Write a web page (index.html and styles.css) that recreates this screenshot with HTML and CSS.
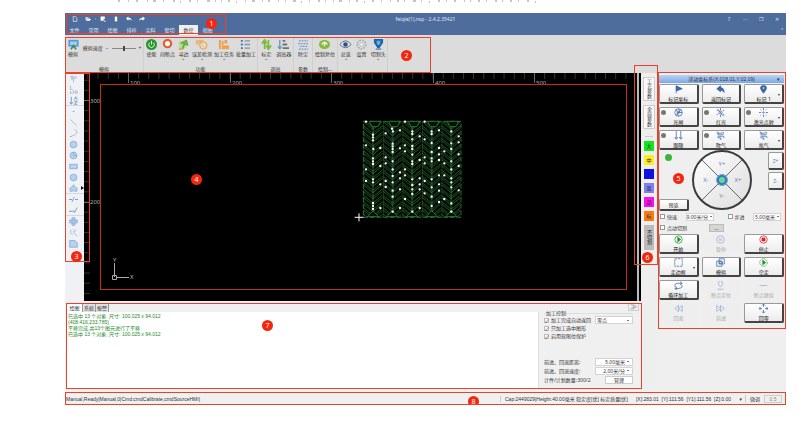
FILE: index.html
```html
<!DOCTYPE html>
<html>
<head>
<meta charset="utf-8">
<title>feiqie(1).nsp - 2.4.2.35421</title>
<link rel="stylesheet" href="styles.css">
</head>
<body>
<svg class="lead" viewBox="0 0 430 3" aria-hidden="true"><path d="M2 1h2m8 0h1m7 0h2m9 0h1m5 0h3m7 0h1m9 0h2m5 1h1m8-1h2m6 0h1m9 0h3m5 0h1m5 0h1m6 0h2m6 1h1m8-1h1m6 0h3m7 0h1m5 0h2m8 0h1m6 0h1m7 0h3m5 1h1m7-1h1m8 0h2m5 0h1m7 0h1m5 0h3m7 0h1m6 0h2m6 1h1m7-1h2m7 0h1m8 0h1m6 0h2m5 0h1m8 0h3m5 0h1m7 1h1m8-1h2m6 0h1m7 0h2m8 0h1m5 0h1m7 0h2m6 0h1m8 0h2m5 0h1m7 0h2m6 0h1m8 0h2m6 1h1"/></svg>
<div class="app">
  <header class="titlebar">
    <div class="title-row">
      <nav class="quick">
        <svg viewBox="0 0 10 10"><path d="M2 1h4l2 2v6H2z"/></svg>
        <svg viewBox="0 0 10 10"><path class="solid" d="M1 2h3l1 1h3v1H3L1 8zM3 5h7L8 8H2z"/></svg>
        <svg viewBox="0 0 10 10" class="narrow"><path class="solid" d="M3 4h4L5 7z"/></svg>
        <svg viewBox="0 0 10 10"><path class="solid" d="M1 1h7v4H6v3H1z"/><path d="M7 6v3h3"/></svg>
        <svg viewBox="0 0 10 10"><path class="solid" d="M3 1h4v8H3z"/></svg>
        <svg viewBox="0 0 10 10"><path class="solid" d="M0 4l4-3v2q5 0 6 5-2-3-6-2v2z"/></svg>
        <svg viewBox="0 0 10 10"><path class="solid" d="M10 4L6 1v2Q1 3 0 8q2-3 6-2v2z"/></svg>
      </nav>
      <h1>feiqie(1).nsp - 2.4.2.35421</h1>
      <div class="window-buttons"><button>?</button><button>─</button><button>❐</button><button>✕</button></div>
    </div>
    <nav class="tabs"><a href="#">文件</a><a href="#">常用</a><a href="#">绘图</a><a href="#">排样</a><a href="#">尖料</a><a href="#">套切</a><a href="#" class="active">数控</a><a href="#">视图</a><button class="fold">⌃</button></nav>
    <span class="mark mark-1"></span><b class="badge badge-1">1</b>
  </header>

  <section class="ribbon">
    <div class="group g-sim">
      <div class="tools">
        <button class="tool"><svg viewBox="0 0 14 13"><rect x="1" y="1" width="12" height="8" fill="#5b9bd5"/><path d="M3 3h8v4H3z" fill="#9fd0f0"/><path d="M4 12l3-4 3 4" fill="none" stroke="#3b8a5a" stroke-width="2"/></svg>模拟</button>
        <label class="speed">模拟速度<span>−</span><input type="range" min="0" max="100" value="50"><span>+</span></label>
      </div>
      <h2>模拟</h2>
    </div>
    <div class="group g-func">
      <div class="tools">
        <button class="tool"><svg viewBox="0 0 12 12"><circle cx="6" cy="6" r="6" fill="#25962a"/><path d="M4 4a3 3 0 1 0 4 0M6 2v4" fill="none" stroke="#fff"/></svg>使能</button>
        <button class="tool"><svg viewBox="0 0 12 12"><circle cx="6" cy="5" r="4" fill="#fff" stroke="#ec5b2b" stroke-width="2.4"/></svg>间断点</button>
        <button class="tool more"><svg viewBox="0 0 12 12"><path d="M1 2h8v8H1z" fill="#b7dca0"/><path d="M3 5l6-3 1 4-3-1-2 6" fill="none" stroke="#5fae35" stroke-width="2"/><path d="M1 10h4v2H1z" fill="#e4a545"/></svg>寻边</button>
        <button class="tool more"><svg viewBox="0 0 14 12"><path d="M1 1h8v5H1z" fill="#efb66a"/><circle cx="9" cy="7" r="4" fill="#f4d9b0" stroke="#dd9a48"/><path d="M3 3l8 7" stroke="#c7ccd2"/></svg>误差检测</button>
        <button class="tool more"><svg viewBox="0 0 12 12"><path d="M1 1h2v10H1zM4 2h2v5H4zM7 1h3v4H7z" fill="#e7a04d"/><path d="M4 7h8v4H4z" fill="#f3a23c"/></svg>加工任务</button>
        <button class="tool"><svg viewBox="0 0 12 12"><path d="M1 2h2M1 6h2M1 10h2" stroke="#3974b8" stroke-width="2"/><path d="M5 2h6M5 6h6M5 10h6" stroke="#88939f" stroke-width="1.4"/></svg>批量加工</button>
      </div>
      <h2>功能</h2>
    </div>
    <div class="group g-height">
      <div class="tools">
        <button class="tool more"><svg viewBox="0 0 12 12"><path d="M4 11V3M1 5l3-4 2 4M8 1v8M6 7l2 4 3-4" fill="none" stroke="#7db93c" stroke-width="2"/></svg>标定</button>
        <button class="tool"><svg viewBox="0 0 12 12"><path d="M2 1v9M0 8l2 3 2-3" fill="none" stroke="#3974b8"/><path d="M5 1h3v2H5zM5 5h5v2H5zM5 9h7v2H5z" fill="#68737f"/></svg>调高器</button>
      </div>
      <h2>调高</h2>
    </div>
    <div class="group g-dust">
      <div class="tools"><button class="tool"><svg viewBox="0 0 12 12"><path d="M1 2h10M0 5h12M2 8h8M1 11h10" stroke="#6f9bcf" stroke-width="1.4" stroke-dasharray="2 1"/></svg>除尘</button></div>
      <h2>参数</h2>
    </div>
    <div class="group g-reset">
      <div class="tools"><button class="tool"><svg viewBox="0 0 14 12"><ellipse cx="7" cy="6" rx="6" ry="5" fill="#83b93c"/><path d="M4 6q3-5 6 0M7 4v4" fill="none" stroke="#f1f7d9" stroke-width="1.6"/></svg>绘制复位</button></div>
      <h2>绘制...</h2>
    </div>
    <div class="group g-view">
      <div class="tools">
        <button class="tool more"><svg viewBox="0 0 12 12"><path d="M0 6q6-8 12 0-6 7-12 0z" fill="#e9eef5" stroke="#56657a"/><circle cx="6" cy="6" r="2.5" fill="#2d5087"/></svg>总览</button>
        <button class="tool"><svg viewBox="0 0 12 12"><circle cx="6" cy="6" r="4.5" fill="#e7e7e7" stroke="#a8adb3" stroke-width="2" stroke-dasharray="2 1"/><circle cx="6" cy="6" r="2" fill="#fff" stroke="#a8adb3"/></svg>设置</button>
        <button class="tool more"><svg viewBox="0 0 12 12"><path d="M1 0h10v4L7 10H5L1 4z" fill="#1f63a8"/><path d="M4 2h4v3L6 7 4 5z" fill="#5bb4e5"/><path d="M3 11h6" stroke="#1f63a8"/></svg>切割头</button>
      </div>
      <h2></h2>
    </div>
    <span class="mark mark-2"></span><b class="badge badge-2">2</b>
  </section>

  <main class="body">
    <div class="left">
      <div class="work">
        <aside class="toolbox">
          <button><svg viewBox="0 0 12 12"><path d="M1 4h10M4 1v6M3 8q4-5 7-1M6 6v5"/></svg></button>
          <button><svg viewBox="0 0 12 12"><path d="M2 1v5h3M2 8v3h3M6 7v4M8 8v3h3V8z"/></svg></button>
          <button class="dark cut"><svg viewBox="0 0 12 12"><path d="M3 1v9M1 8l2 3 2-3M7 5l2-4 2 4M7 7h4l-4 4h4"/></svg></button>
          <button class="dark"><svg viewBox="0 0 12 12"><path d="M5 6h2"/></svg></button>
          <button><svg viewBox="0 0 12 12"><path d="M2 2l8 8"/></svg></button>
          <button><svg viewBox="0 0 12 12"><path d="M7 1q5 1 3 5-1 2-8 4M1 10h3"/></svg></button>
          <button class="fill"><svg viewBox="0 0 12 12"><circle cx="6" cy="6" r="4.5"/></svg></button>
          <button class="fill dark"><svg viewBox="0 0 12 12"><circle cx="6" cy="6" r="4.5"/><path d="M6 1v5h5"/></svg></button>
          <button class="fill dark"><svg viewBox="0 0 12 12"><path d="M1 3h10v6H1z"/></svg></button>
          <button class="fill"><svg viewBox="0 0 12 12"><circle cx="6" cy="6" r="4.5"/></svg></button>
          <button class="fill dark cut fly"><svg viewBox="0 0 12 12"><path d="M6 1l2 3 3 2-1 4-4-1-4 1-1-4 3-2z"/></svg></button>
          <button class="dark"><svg viewBox="0 0 12 12"><path d="M0 6h4M4 9l3-6M8 6h4"/></svg></button>
          <button class="dark cut"><svg viewBox="0 0 12 12"><path d="M0 7h7M7 9l4-7"/></svg></button>
          <button class="fill dark"><svg viewBox="0 0 12 12"><path d="M4 1h4v3h3v4H8v3H4V8H1V4h3zM4 4h4v4H4z"/></svg></button>
          <button><svg viewBox="0 0 12 12"><path d="M4 2q-5 4 1 7M7 3h3M6 6l5 5M5 5h3"/></svg></button>
          <button class="fill"><svg viewBox="0 0 12 12"><path d="M1 2h7l3 3v6H1z"/></svg></button>
          <span class="mark mark-3"></span><b class="badge badge-3">3</b>
        </aside>
        <div class="canvas">
          <svg class="drawing" width="557" height="227" viewBox="0 0 557 227">
            <defs>
              <pattern id="minor-x" x="44" width="10.15" height="8" patternUnits="userSpaceOnUse"><path d="M.5 0v6" stroke="#333"/></pattern>
              <pattern id="minor-y" y="27" width="8" height="10.15" patternUnits="userSpaceOnUse"><path d="M0 .5h6" stroke="#333"/></pattern>
              <pattern id="chevrons" x="70" y="64" width="58.6" height="19" patternUnits="userSpaceOnUse"><path d="M1 -6L29 17 57 -6M1 1L29 24 57 1M1 13L29 36 57 13M1 -18L29 5 57 -18M0 0v19M29.3 0v19" fill="none" stroke="#38a044" stroke-width="1.9"/></pattern>
            </defs>
            <rect width="550" height="6" fill="url(#minor-x)"/>
            <rect width="7" height="227" fill="url(#minor-y)"/>
            <path class="major" d="M44.500 0v10M146.500 0v10M247.500 0v10M349.500 0v10M450.500 0v10M0 27.500h5M0 129.500h5"/>
            <g class="scale"><text x="46" y="12">100</text><text x="148" y="12">200</text><text x="249" y="12">300</text><text x="351" y="12">400</text><text x="452" y="12">500</text><text x="6" y="30">300</text><text x="6" y="131">200</text></g>
            <g transform="translate(256 27) scale(.3333)">
              <rect x="70" y="64" width="293" height="288" fill="url(#chevrons)" stroke="#38a044" stroke-width="2" stroke-dasharray="14 6"/>
              <path d="M88 64h34l-8 16H96zM146 64h34l-8 16h-18zM205 64h34l-8 16h-18zM263 64h34l-8 16h-18zM322 64h34l-8 16h-18zM82 350l17-18 17 18zM140 350l17-18 17 18zM199 350l17-18 17 18zM258 350l17-18 17 18zM317 350l17-18 17 18z" fill="#031006" stroke="#38a044" stroke-width="2"/>
              <path class="dots" d="M78 65h0M195 65h0M254 65h0M156 86h0M159 94h0M137 100h0M180 91h0M99 104h0M99 112h0M99 121h0M78 136h0M100 147h0M121 144h0M158 131h0M158 139h0M158 147h0M158 156h0M180 145h0M195 136h0M195 154h0M217 94h0M217 102h0M217 118h0M217 138h0M217 147h0M239 109h0M254 118h0M275 94h0M275 102h0M297 91h0M275 129h0M297 144h0M275 156h0M313 154h0M334 94h0M356 109h0M356 127h0M334 130h0M356 163h0M334 147h0M99 175h0M99 184h0M99 192h0M137 172h0M121 198h0M137 190h0M158 184h0M78 208h0M158 208h0M180 217h0M195 208h0M217 164h0M217 184h0M217 192h0M239 180h0M254 172h0M254 190h0M275 175h0M275 184h0M297 180h0M297 163h0M313 190h0M334 184h0M334 208h0M356 198h0M78 243h0M99 238h0M99 247h0M121 253h0M137 243h0M137 261h0M158 228h0M158 247h0M158 272h0M180 235h0M180 268h0M195 226h0M195 297h0M217 238h0M217 255h0M217 268h0M239 235h0M239 253h0M239 268h0M254 243h0M254 280h0M275 238h0M275 262h0M275 290h0M297 226h0M297 253h0M297 272h0M313 226h0M313 297h0M334 235h0M334 247h0M334 262h0M356 271h0M99 309h0M99 318h0M99 327h0M121 324h0M158 290h0M158 335h0M180 324h0M217 282h0M217 335h0M239 324h0M275 318h0M297 306h0M334 310h0M334 335h0"/>
              <path d="M44 352h26M57 340v24" stroke="#fff" stroke-width="3"/>
            </g>
            <path class="axis" d="M30.500 190v14M32 204.500h13M28.500 202.500h4v4h-4z"/>
            <g class="axis-label"><text x="29" y="189">Y</text><text x="46" y="206">X</text></g>
          </svg>
          <span class="mark mark-4"></span><b class="badge badge-4">4</b>
        </div>
      </div>

      <section class="log-panel">
        <div class="log">
          <nav class="log-tabs"><button class="active">绘图</button><button>系统</button><button>报警</button></nav>
          <pre>已选中 13 个对象, 尺寸: 100.025 x 94.012
(408.416,233.785)
平移完成,共13个图元进行了平移
已选中 13 个对象, 尺寸: 100.025 x 94.012</pre>
        </div>
        <form class="control">
          <button type="button" class="collapse">≫</button>
          <fieldset>
            <legend>加工控制</legend>
            <div class="row"><label><input type="checkbox" checked>加工完成自动返回</label><select aria-label="返回位置"><option>零点</option></select></div>
            <div class="row"><label><input type="checkbox" checked>只加工选中图形</label></div>
            <div class="row"><label><input type="checkbox" checked>启用软限位保护</label></div>
          </fieldset>
          <div class="values">
            <div class="row"><label for="dist">前进、回退距离:</label><select id="dist" class="num"><option>5.00毫米</option></select></div>
            <div class="row"><label for="rate">前进、回退速度:</label><select id="rate" class="num"><option>2.00米/分</option></select></div>
            <div class="row"><span>计件/计划数量:300/2</span><button type="button" class="manage">管理</button></div>
          </div>
        </form>
        <span class="mark mark-7"></span><b class="badge badge-7">7</b>
      </section>
    </div>

    <aside class="layers">
      <button class="side-tab">工艺参数</button>
      <button class="side-tab">全局参数</button>
      <hr>
      <button class="layer green">大</button>
      <button class="layer yellow">中</button>
      <button class="layer blue">小</button>
      <button class="layer violet">蓝</button>
      <button class="layer magenta">品</button>
      <button class="layer orange">标</button>
      <button class="layer none">不切割</button>
      <span class="mark mark-6"></span><b class="badge badge-6">6</b>
    </aside>

    <section class="panel">
      <div class="coords">浮动坐标系(X:018.01,Y:02.09)<span>▾</span></div>
      <div class="keys">
        <button><svg viewBox="0 0 12 12"><path class="f" d="M3 1l8 4-8 3z"/><path d="M3 1v10"/></svg>标记坐标</button>
        <button><svg viewBox="0 0 12 12"><path class="f" d="M1 5l5-4v2q5 1 5 7-1-3-5-3v2z"/></svg>返回标记</button>
        <button class="drop"><svg viewBox="0 0 12 12"><path class="f" d="M6 11Q2 6 2 4a4 3.500 0 0 1 8 0q0 2-4 7z"/><circle cx="6" cy="4" r="1.500" fill="#fff"/></svg>标记 1</button>
        <button class="lamp"><svg viewBox="0 0 12 12"><circle cx="6" cy="6" r="5"/><path d="M6 1l2 5-5 3M11 6H5L3 2M6 11L4 6l5-3"/></svg>光闸</button>
        <button class="lamp"><svg viewBox="0 0 12 12"><circle cx="6" cy="6" r="2"/><path d="M6 0v3M6 9v3M1 3l2 1M9 8l2 1M1 9l2-1M9 4l2-1M2 1l8 10"/></svg>红光</button>
        <button class="lamp drop"><svg viewBox="0 0 12 12"><circle cx="6" cy="6" r="1"/><path d="M6 0v3M6 9v3M0 6h3M9 6h3M2 2l1 1M9 9l1 1M2 10l1-1M9 3l1-1"/></svg>激光点射</button>
        <button class="lamp"><svg viewBox="0 0 12 12"><path d="M3 0v10M1 8l2 3 2-3M9 0v10M7 8l2 3 2-3"/></svg>跟随</button>
        <button class="lamp"><svg viewBox="0 0 12 12"><path d="M1 3h6q3-3 3 0T7 5H2M2 7h8q2 2 0 2M2 9h4q2 3-1 2M1 1l3 2"/></svg>吹气</button>
        <button class="drop"><svg viewBox="0 0 12 12"><path d="M1 3h6q3-3 3 0T7 5H2M2 7h8q2 2 0 2M2 9h4q2 3-1 2M1 1l3 2"/></svg>氮气</button>
      </div>
      <div class="jog">
        <div class="jog-left"><i class="status-dot"></i><button class="preview">预览</button></div>
        <svg class="wheel" viewBox="0 0 60 60">
          <defs><linearGradient id="dish" x2="1" y2="1"><stop stop-color="#fff"/><stop offset="1" stop-color="#ddd"/></linearGradient></defs>
          <circle cx="30" cy="30" r="29" fill="url(#dish)" stroke="#3c3c3c" stroke-width="2"/>
          <path d="M10 10l40 40M50 10L10 50" stroke="#444" stroke-width=".8"/>
          <circle cx="30" cy="30" r="5.500" fill="#3678b8" stroke="#7aa4cc"/><circle cx="30" cy="30" r="3" fill="#5fdc9b"/>
          <g><text x="30" y="16">Y+</text><text x="30" y="48">Y-</text><text x="14" y="32">X-</text><text x="46" y="32">X+</text></g>
        </svg>
        <div class="z-keys"><button>Z+</button><button>Z-</button></div>
      </div>
      <div class="moves">
        <label><input type="checkbox">快速</label><select aria-label="速度" class="num"><option>9.00米/分</option></select>
        <label class="step"><input type="checkbox">步进</label><select aria-label="步距" class="num"><option>5.00毫米</option></select>
      </div>
      <div class="moves"><label><input type="checkbox">点动切割</label><button class="dots-button">...</button></div>
      <div class="keys lower">
        <button class="go"><svg viewBox="0 0 12 12"><circle cx="6" cy="6" r="5"/><path class="f" d="M5 3l4 3-4 3z"/></svg>开始</button>
        <button class="off" disabled><svg viewBox="0 0 12 12"><circle cx="6" cy="6" r="5"/><path d="M5 4v4M7 4v4"/></svg>暂停</button>
        <button class="stop"><svg viewBox="0 0 12 12"><circle cx="6" cy="6" r="5"/><path class="f" d="M4 4h4v4H4z"/></svg>停止</button>
        <button class="drop"><svg viewBox="0 0 12 12"><path d="M1 1h10v10H1z" stroke-dasharray="3 1"/></svg>走边框</button>
        <button><svg viewBox="0 0 12 12"><path d="M1 4h7v7H1zM4 1h7v7H4zM5 4l4 2-4 2z"/></svg>模拟</button>
        <button class="go"><svg viewBox="0 0 12 12"><circle cx="6" cy="6" r="5" stroke-dasharray="2 1"/><path class="f" d="M5 3l4 3-4 3z"/></svg>空走</button>
        <button><svg viewBox="0 0 12 12"><path d="M2 8q-3-5 4-5h4M8 1l3 2-3 2M10 5q3 4-4 5H2M4 8l-3 2 3 2"/></svg>循环加工</button>
        <button class="off" disabled><svg viewBox="0 0 12 12"><path d="M6 8Q3 5 3 3a3 3 0 0 1 6 0q0 2-3 5zM2 11h8"/></svg>断点定位</button>
        <button class="off" disabled><svg viewBox="0 0 12 12"><path d="M1 6h10"/></svg>断点继续</button>
        <button class="off" disabled><svg viewBox="0 0 12 12"><path d="M6 2L1 6l5 4zM11 2L6 6l5 4z"/></svg>回退</button>
        <button class="off" disabled><svg viewBox="0 0 12 12"><path d="M1 2l5 4-5 4zM6 2l5 4-5 4z"/></svg>前进</button>
        <button><svg viewBox="0 0 12 12"><path d="M6 0v4M6 8v4M0 6h4M8 6h4M4 2l2-2 2 2M4 10l2 2 2-2M2 4L0 6l2 2M10 4l2 2-2 2"/></svg>回零</button>
      </div>
      <span class="mark mark-5"></span><b class="badge badge-5">5</b>
    </section>
  </main>

  <footer class="status">
    <span class="message">Manual,Ready|Manual,0|Cmd:cmdCalibrate,cmdSourceHMI|</span>
    <span class="sensor">Cap:2449029|Height:40.00毫米 稳定度[优] 标定质量[优]</span>
    <span class="position">[X]:283.01&nbsp; [Y]:111.56&nbsp; [Y1]:111.56&nbsp; [Z]:0.00<i>▾</i></span>
    <label class="fine">微调<input value="0.5"></label>
    <span class="mark mark-8"></span><span class="badge-clip"><b class="badge">8</b></span>
  </footer>
</div>
</body>
</html>
```
FILE: styles.css
```css
* { box-sizing: border-box; }
body { margin: 0; background: #fff; color: #333; font: 5px/6px "Noto Sans", "Noto Sans CJK SC", sans-serif; }
button, select, input { font: inherit; color: inherit; margin: 0; padding: 0; border: 0; background: none; appearance: none; border-radius: 0; }
h1, h2, pre, fieldset, legend { margin: 0; padding: 0; border: 0; font: inherit; }
a { color: inherit; text-decoration: none; }
button, a, label, span { white-space: nowrap; }

.lead { display: block; width: 430px; height: 3px; margin-left: 116px; fill: none; stroke: #888; }
.app { margin: 10px 22px 0 65px; background: #f0f0f0; }

/* numbered callouts laid over the regions */
.mark { position: absolute; border: 1px solid #e8422c; pointer-events: none; z-index: 2; }
.badge { position: absolute; z-index: 3; width: 11px; height: 11px; border-radius: 50%; background: #f5260f; color: #fff; font: 7px/11px "Noto Sans", sans-serif; text-align: center; }
.mark-1 { inset: 1px auto 1px 1px; width: 160px; }
.badge-1 { left: 141px; top: 5px; }
.mark-2 { inset: 2px auto 0 0; width: 366px; border-width: 1px; }
.badge-2 { left: 336px; top: 15px; }
.mark-3 { left: 0; top: 0; width: 25px; height: 189px; }
.badge-3 { left: 6px; top: 178px; }
.mark-4 { inset: 11px 14px 11px 16px; border-color: #c23018; }
.badge-4 { left: 107px; top: 101px; }
.mark-5 { inset: -1px 0 auto 1px; height: 257px; border-color: #e8422c; }
.badge-5 { left: 16px; top: 100px; }
.mark-6 { left: -7px; top: -8px; width: 24px; height: 200px; }
.badge-6 { left: 1px; top: 179px; }
.mark-7 { inset: 2px -1px 2px 1px; }
.badge-7 { left: 197px; top: 19px; }
.mark-8 { inset: 0; }
.badge-clip { position: absolute; left: 403px; top: 4px; width: 11px; height: 8px; overflow: hidden; z-index: 3; }

/* title bar */
.titlebar { position: relative; height: 22px; background: #4f6d9c; color: #dfe7f3; }
.title-row { display: grid; grid-template-columns: 1fr auto 1fr; align-items: center; height: 12px; }
.quick { display: flex; align-items: center; gap: 7px; padding-left: 7px; }
.quick svg { width: 6px; height: 6px; fill: none; stroke: #fff; }
.quick .solid { fill: #fff; stroke: none; }
.quick .narrow { width: 3px; margin: 0 -4px; }
.window-buttons { display: flex; justify-content: flex-end; gap: 10px; padding-right: 6px; }
.window-buttons button { width: 6px; }
.tabs { display: flex; height: 10px; }
.tabs a { width: 19px; line-height: 10px; text-align: center; }
.tabs .active { background: #f0f0f0; color: #444; }
.fold { margin-left: auto; width: 8px; }

/* ribbon */
.ribbon { position: relative; display: flex; height: 38px; padding-top: 3px; background: #dcdcdc; }
.group { display: flex; flex-direction: column; justify-content: space-between; border-right: 1px solid #cfcfcf; }
.group h2 { height: 6px; margin-bottom: 1px; text-align: center; white-space: nowrap; }
.tools { display: flex; justify-content: space-around; padding-top: 1px; }
.tool { position: relative; display: flex; flex-direction: column; align-items: center; gap: 1px; }
.tool svg { width: 13px; height: 11px; }
.more::after { content: "⌄"; height: 4px; line-height: 2px; margin-top: -1px; }
.g-sim { width: 79px; }
.g-func { width: 114px; }
.g-height { width: 36px; }
.g-dust { width: 19px; }
.g-reset { width: 25px; }
.g-view { width: 50px; }
.speed { display: flex; align-items: center; gap: 3px; padding-top: 0; }
.speed input { width: 24px; height: 6px; background: linear-gradient(#888, #888) center / 100% 1px no-repeat; }
.speed input::-webkit-slider-thumb { appearance: none; width: 2px; height: 5px; background: #444; }

/* work area */
.body { display: flex; height: 318px; }
.left { flex: 1; min-width: 0; display: flex; flex-direction: column; }
.work { flex: 1; display: flex; min-height: 0; }
.toolbox { position: relative; width: 19px; display: flex; flex-direction: column; background: #f0f1f4; }
.toolbox button { position: relative; height: 11px; display: grid; place-items: center; padding-right: 3px; }
.toolbox svg { width: 9px; height: 9px; fill: none; stroke: #9dadc4; }
.toolbox .dark svg { stroke: #5284c0; }
.toolbox .fill svg { fill: #b7d2ef; stroke: #7fa6d6; }
.toolbox .cut { border-bottom: 1px solid #d5d8de; }
.fly::after { content: ""; position: absolute; right: 0; border: 2px solid transparent; border-left: 3px solid #111; border-right: 0; }
.canvas { position: relative; flex: 1; min-width: 0; overflow: hidden; background: linear-gradient(#bbb, #bbb) right 2px top / 2px 100% no-repeat #000; }
.drawing { display: block; }
.major { stroke: #666; }
.scale { fill: #aaa; font-size: 6px; }
.axis { fill: none; stroke: #aaa; }
.axis-label { fill: #bbb; font-size: 6px; }
.dots { stroke: #fff; stroke-width: 7; stroke-linecap: round; }

/* message log and processing options */
.log-panel { position: relative; display: flex; height: 90px; padding: 2px 0 2px 1px; }
.log { flex: 1; display: flex; flex-direction: column; }
.log-tabs { display: flex; height: 9px; padding-left: 1px; }
.log-tabs button { width: 13px; border-right: 1px solid #999; background: #e2e2e2; }
.log-tabs .active { width: 16px; background: #fff; }
.log pre { flex: 1; padding: 1px 2px; background: #fff; border-right: 1px solid #ddd; color: #238a2b; font-family: "Liberation Sans", "Noto Sans CJK SC", sans-serif; }
.control { display: flex; flex-direction: column; width: 102px; padding: 0 8px 5px 5px; }
.collapse { align-self: flex-end; width: 11px; height: 8px; margin-right: -6px; border: 1px solid #ccc; font-size: 7px; line-height: 6px; color: #777; }
fieldset { border-top: 1px solid #ddd; }
legend { margin-left: 2px; line-height: 5px; }
.row { display: flex; align-items: center; justify-content: space-between; height: 8px; }
.values { margin-top: auto; }
.values .row { height: 9px; }
label { display: flex; align-items: center; }
[type="checkbox"] { width: 5px; height: 5px; margin-right: 2px; border: 1px solid #999; background: #fff; display: grid; place-items: center; }
[type="checkbox"]:checked { border-color: #bbb; }
[type="checkbox"]:checked::after { content: "✓"; line-height: 4px; }
select { height: 8px; background: linear-gradient(#777, #777) right 3px center / 2px 1px no-repeat #fff; border: 1px solid #d3d3d3; }
.control select { width: 38px; padding-left: 1px; }
select.num, .control select.num { padding-right: 7px; text-align: right; text-align-last: right; }
.manage { width: 28px; height: 8px; background: #fff; border: 1px solid #ccc; }

/* layer strip */
.layers { position: relative; width: 16px; display: flex; flex-direction: column; align-items: center; gap: 4px; padding-top: 4px; background: #eee; }
.side-tab { width: 12px; height: 24px; border: 1px solid #ccc; background: #f8f8f8; writing-mode: vertical-rl; text-orientation: upright; line-height: 10px; }
hr { width: 8px; margin: 3px 0 0; border: 0; border-top: 1px solid #ccc; }
.layer { width: 10px; height: 10px; color: #222; }
.green { background: #14e51e; }
.yellow { background: #fbec25; }
.blue { background: #0c10ef; }
.violet { background: #7d80f0; }
.magenta { background: #f511ef; }
.orange { background: #f47d13; }
.none { height: 25px; background: #bbb; writing-mode: vertical-rl; text-orientation: upright; line-height: 10px; }

/* machine control panel */
.panel { position: relative; width: 129px; padding: 2px 2px 0; background: #efefef; }
.coords { display: flex; justify-content: flex-end; height: 8px; line-height: 8px; background: linear-gradient(#b9d3f5, #7ba9e4); font-family: "Liberation Sans", "Noto Sans CJK SC", sans-serif; }
.coords span { margin: 0 4px 0 22px; }
.keys { display: grid; grid-template-columns: repeat(3, 1fr); gap: 3px; margin-top: 1px; }
.keys button { position: relative; height: 20px; display: flex; flex-direction: column; align-items: center; justify-content: center; gap: 2px; color: #111; }
.keys button, .z-keys button, .preview { background: linear-gradient(#fff, #ececec); border: 1px solid #999; border-right: 2px solid #444; border-bottom: 2px solid #444; border-radius: 2px; }
.keys svg { width: 9px; height: 9px; fill: none; stroke: #3a65a8; }
.keys .f { fill: #3a65a8; }
.lamp::before { content: ""; position: absolute; left: 1px; top: 2px; width: 5px; height: 5px; border-radius: 50%; background: #777; }
.drop::after { content: ""; position: absolute; right: 2px; top: 9px; border: 1px solid transparent; border-top: 2px solid #333; }
.keys .off { color: #aaa; border-color: transparent; background: #eee; }
.keys .off svg { stroke: #8eafd7; }
.keys .go svg { stroke: #249a28; }
.keys .go .f { fill: #249a28; }
.keys .stop svg { stroke: #dc2026; }
.keys .stop .f { fill: #dc2026; }
.jog { display: flex; justify-content: space-between; height: 61px; }
.jog-left { width: 32px; display: flex; flex-direction: column; justify-content: space-between; }
.status-dot { width: 7px; height: 7px; margin: 4px 0 0 6px; border-radius: 50%; background: #3db43c; }
.preview { width: 30px; height: 12px; }
.wheel { width: 60px; height: 60px; }
.wheel text { font-size: 6px; fill: #6284b5; text-anchor: middle; }
.z-keys { width: 32px; display: flex; flex-direction: column; align-items: flex-end; gap: 2px; padding-top: 2px; }
.z-keys button { width: 16px; height: 18px; color: #6284b5; }
.moves { display: flex; align-items: center; height: 11px; padding: 0 3px 0 1px; }
.moves select { width: 28px; margin-left: auto; }
.moves select.num { padding-right: 5px; background-position: right 1px center; }
.step { margin-left: 14px; }
.dots-button { width: 15px; height: 8px; margin-left: 22px; background: #d5d5d5; border: 1px solid #bbb; line-height: 4px; }

/* status bar */
.status { position: relative; display: flex; align-items: center; height: 13px; margin-top: 1px; padding: 1px 4px 0 1px; background: #f0f0f0; font-family: "Liberation Sans", "Noto Sans CJK SC", sans-serif; }
.message { flex: 1; }
.sensor { width: 125px; padding-left: 4px; border-left: 1px solid #ccc; }
.position { display: flex; justify-content: space-between; width: 120px; padding: 0 3px 0 10px; border-left: 1px solid #ccc; }
.fine { gap: 4px; padding-left: 4px; border-left: 1px solid #ccc; }
.fine input { width: 18px; height: 8px; border: 1px solid #ccc; text-align: center; color: #888; }
```
